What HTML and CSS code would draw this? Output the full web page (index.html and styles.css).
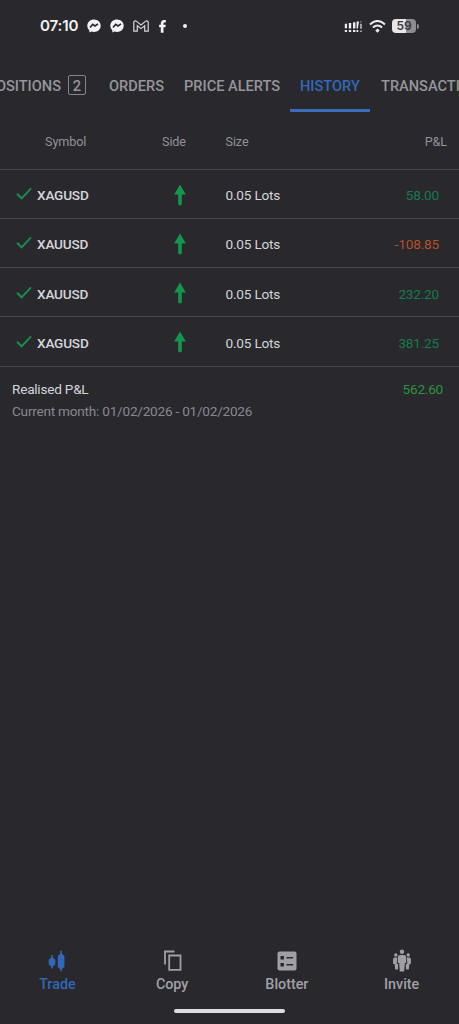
FILE: index.html
```html
<!DOCTYPE html>
<html lang="en">
<head>
<meta charset="utf-8">
<meta name="viewport" content="width=device-width">
<title>History</title>
<link rel="stylesheet" href="styles.css">
</head>
<body>
<svg class="defs" width="0" height="0">
  <symbol id="check" viewBox="0 0 16 13"><path d="M1 6.800 5.600 11.300 15 1.400" fill="none" stroke="currentColor" stroke-width="1.900"/></symbol>
  <symbol id="up" viewBox="0 0 12 22"><path d="M6 .4 11.800 10.400H7.800V20q0 1.400-1.800 1.400T4.200 20V10.400H.2Z" fill="currentColor"/></symbol>
  <symbol id="messenger" viewBox="0 0 14 14"><path d="M7 .4C3.200.4.300 3.100.300 6.700c0 1.900.800 3.400 2 4.500l.1 2.200 2.100-.9c.8.300 1.600.400 2.500.4 3.800 0 6.700-2.700 6.700-6.200S10.800.400 7 .4Z" fill="#f3f3f5"/><path d="M3 8.500 5.700 5.400 8 7 11 4.900" fill="none" stroke="#28282d" stroke-width="1.600"/></symbol>
</svg>
<div class="screen">
  <header class="status">
    <div class="status-left">
      <span class="clock">07:10</span>
      <svg class="msg" width="14" height="14"><use href="#messenger"/></svg>
      <svg class="msg" width="14" height="14"><use href="#messenger"/></svg>
      <svg class="mail" width="16" height="12" viewBox="0 0 16 12"><path d="M.8 1.900Q2 .1 3.600 1.400L8 4.900 12.400 1.400Q14 .1 15.200 1.900V11.200H11.700V5.700L8 8.600 4.300 5.700V11.200H.8Z" fill="none" stroke="#d8d8db" stroke-width="1.200"/></svg>
      <svg class="fb" width="7" height="13" viewBox="0 0 7 13"><path d="M1.800 12.800V7.300H.1V4.800H1.800V3.500C1.800 1.300 3.100.1 5 .1h1.800v2.400H5.500c-.8 0-1 .4-1 1.100v1.200h2.200l-.3 2.500H4.500v5.500Z" fill="#f3f3f5"/></svg>
      <span class="dot"></span>
    </div>
    <div class="status-right">
      <svg class="signal" width="18" height="13" viewBox="0 0 18 13" fill="#ededf0"><path d="M.8 3.800h2.200v4.500H.8zM4.800 3h2.400v5.500H4.800zM9 2.300h2.400v6.300H9zM12.600 1.600h2.400l-1.100 6.800h-1.300zM16.400 3.800h1.200v5h-1.200zM.8 10h2.200v2H.8zM4.800 10h2.400v2H4.800zM9 10h2.400v2H9zM12.500 10h1.800v2h-1.800zM16.400 10.500h1.200V12h-1.200z"/><path d="M16.400 1h1v1.500h-1z" opacity=".6"/></svg>
      <svg class="wifi" width="17" height="13" viewBox="0 0 17 13"><path d="M1 4.400Q8.500-2.400 16 4.400M3.900 7.600Q8.500 3.400 13.100 7.600" fill="none" stroke="#ededf0" stroke-width="2"/><path d="M8.500 8.600 10.700 10.600 8.500 12.800 6.300 10.600Z" fill="#ededf0"/></svg>
      <span class="battery">59</span><span class="battery-tip"></span>
    </div>
  </header>
  <nav class="tabs">
    <div class="tab positions"><span>POSITIONS</span><span class="count">2</span></div>
    <div class="tab orders">ORDERS</div>
    <div class="tab alerts">PRICE ALERTS</div>
    <div class="tab history">HISTORY</div>
    <div class="tab transactions">TRANSACTIONS</div>
  </nav>
  <main>
    <div class="row head"><span class="symbol">Symbol</span><span class="side">Side</span><span class="size">Size</span><span class="pnl">P&amp;L</span></div>
    <div class="row"><span class="symbol"><svg width="16" height="13"><use href="#check"/></svg>XAGUSD</span><span class="side"><svg width="12" height="22"><use href="#up"/></svg></span><span class="size">0.05 Lots</span><span class="pnl gain">58.00</span></div>
    <div class="row"><span class="symbol"><svg width="16" height="13"><use href="#check"/></svg>XAUUSD</span><span class="side"><svg width="12" height="22"><use href="#up"/></svg></span><span class="size">0.05 Lots</span><span class="pnl loss">-108.85</span></div>
    <div class="row"><span class="symbol"><svg width="16" height="13"><use href="#check"/></svg>XAUUSD</span><span class="side"><svg width="12" height="22"><use href="#up"/></svg></span><span class="size">0.05 Lots</span><span class="pnl gain">232.20</span></div>
    <div class="row"><span class="symbol"><svg width="16" height="13"><use href="#check"/></svg>XAGUSD</span><span class="side"><svg width="12" height="22"><use href="#up"/></svg></span><span class="size">0.05 Lots</span><span class="pnl gain">381.25</span></div>
    <section class="summary">
      <div class="realised"><span class="label">Realised P&amp;L</span><span class="total">562.60</span></div>
      <div class="period">Current month: 01/02/2026 - 01/02/2026</div>
    </section>
  </main>
  <nav class="bottom">
    <div class="item active"><svg width="24" height="24" viewBox="0 0 24 24" fill="currentColor"><path d="M6.200 6h1.600v2.400L10.300 10.500v5L7.800 17.600V19.500H6.200V17.600L3.700 15.500v-5L6.200 8.400ZM15.300 1.800h1.600v2.900L19.400 7v11l-2.500 2.300v2h-1.600v-2L12.800 18V7l2.500-2.300Z"/></svg><span>Trade</span></div>
    <div class="item"><svg width="24" height="24" viewBox="0 0 24 24" fill="none" stroke="currentColor" stroke-width="1.800"><path d="M5 15.500V2.500H14.500M9.200 6.500H20.500v14.300H9.200Z"/></svg><span>Copy</span></div>
    <div class="item"><svg width="24" height="24" viewBox="0 0 24 24"><rect x="2.500" y="2.500" width="19" height="19" rx="2" fill="currentColor"/><path d="M5.500 7h3.400v3.400H5.500zM5.500 14h3.400v3.400H5.500zM11.500 7.900h6.600v1.700h-6.600zM11.500 14.900h6.600v1.700h-6.600z" fill="#28282d"/></svg><span>Blotter</span></div>
    <div class="item"><svg width="24" height="24" viewBox="0 0 24 24" fill="currentColor"><circle cx="12" cy="2.800" r="2.200"/><circle cx="5.800" cy="6" r="1.700"/><circle cx="18.200" cy="6" r="1.700"/><path d="M10 6h4q2 0 2.100 2l.2 5.800-1.500.4L14.200 22.500H9.800L9.200 14.200l-1.500-.4.200-5.800q.1-2 2.100-2ZM4.600 8.500h2.600l-.5 6 1.600 1L8 20.500H5.200l-.5-5-1.600-.8V10.300Q3.200 8.500 4.600 8.500ZM19.400 8.500h-2.600l.5 6-1.600 1 .3 5h2.800l.5-5 1.600-.8V10.300Q20.800 8.500 19.400 8.500Z"/></svg><span>Invite</span></div>
  </nav>
  <div class="home"></div>
</div>
</body>
</html>
```
FILE: styles.css
```css
* { box-sizing: border-box; }
body { margin: 0; background: #28282d; color: #d5d5d9; font-family: Roboto, sans-serif; }
.defs { display: block; }
.screen { display: flex; flex-direction: column; width: 459px; height: 1024px; overflow: hidden; }
svg { display: block; flex: none; }

.status { display: flex; justify-content: space-between; height: 52px; padding: 0 40px; }
.status-left, .status-right { display: flex; align-items: center; height: 52px; }
.clock { width: 47px; font: 600 15.2px/20px Inter, sans-serif; letter-spacing: -0.2px; color: #f0f0f2; }
.msg { margin-right: 9px; }
.mail { margin-right: 10px; }
.fb { margin-right: 17px; }
.dot { width: 4px; height: 4px; border-radius: 50%; background: #f0f0f2; }
.wifi { margin: 0 6px 0 7px; }
.battery { width: 24px; height: 14px; border-radius: 4px; background: linear-gradient(90deg, #e6e6e9 60%, #8d8d91 60%); color: #38383d; font: 600 12px/14px Inter, sans-serif; text-align: center; }
.battery-tip { width: 2px; height: 5px; margin-left: 1px; border-radius: 0 2px 2px 0; background: #8d8d91; }

.tabs { display: flex; height: 68px; color: #96969a; font-size: 14.6px; font-weight: 500; line-height: 20px; white-space: nowrap; }
.tab { flex: none; height: 60px; padding: 24px 0 0 10px; }
.positions { display: flex; justify-content: flex-end; gap: 7px; width: 99px; padding-right: 13px; }
.count { flex: none; width: 18px; height: 20px; margin-top: -1px; border: 1px solid #85858a; border-radius: 2px; text-align: center; }
.orders { width: 75px; }
.alerts { width: 116px; }
.history { width: 80px; color: #3268b8; border-bottom: 3px solid #3c6cba; border-radius: 1px; }
.transactions { padding-left: 11px; }

.row { display: grid; grid-template-columns: 152px 73px 110px 1fr; align-items: center; height: 49.25px; padding: 3px 20px 0 0; border-bottom: 1px solid #47474b; font-size: 13.6px; letter-spacing: -0.2px; line-height: 20px; }
.row.head { height: 49.5px; padding: 3px 12px 8px 0; color: #929297; font-size: 12.6px; letter-spacing: -0.1px; }
.symbol { display: flex; align-items: center; gap: 5px; padding-left: 16px; color: #d6d6da; font-weight: 500; }
.symbol svg { color: #18904e; margin-top: -3px; }
.head .symbol { padding-left: 45px; color: inherit; font-weight: 400; }
.side { padding-left: 22px; color: #15964d; }
.side svg { margin-top: -1px; }
.head .side { padding-left: 10px; color: inherit; }
.size { padding-left: 0.5px; }
.pnl { text-align: right; }
.gain { color: #167c4b; }
.loss { color: #b84f2a; }
.summary { padding: 11px 16px 0 12px; font-size: 13.6px; letter-spacing: -0.23px; line-height: 22px; }
.realised { display: flex; justify-content: space-between; height: 22px; }
.total { color: #2b9440; }
.period { color: #88888d; }

.bottom { display: grid; grid-template-columns: repeat(4, 1fr); height: 60px; margin-top: auto; color: #a0a0a4; }
.item { display: flex; flex-direction: column; align-items: center; font-size: 14.3px; font-weight: 500; line-height: 22px; }
.active { color: #3267b7; }
.home { width: 111px; height: 4px; margin: 0 auto 11px; border-radius: 2px; background: #dddde1; }
```
